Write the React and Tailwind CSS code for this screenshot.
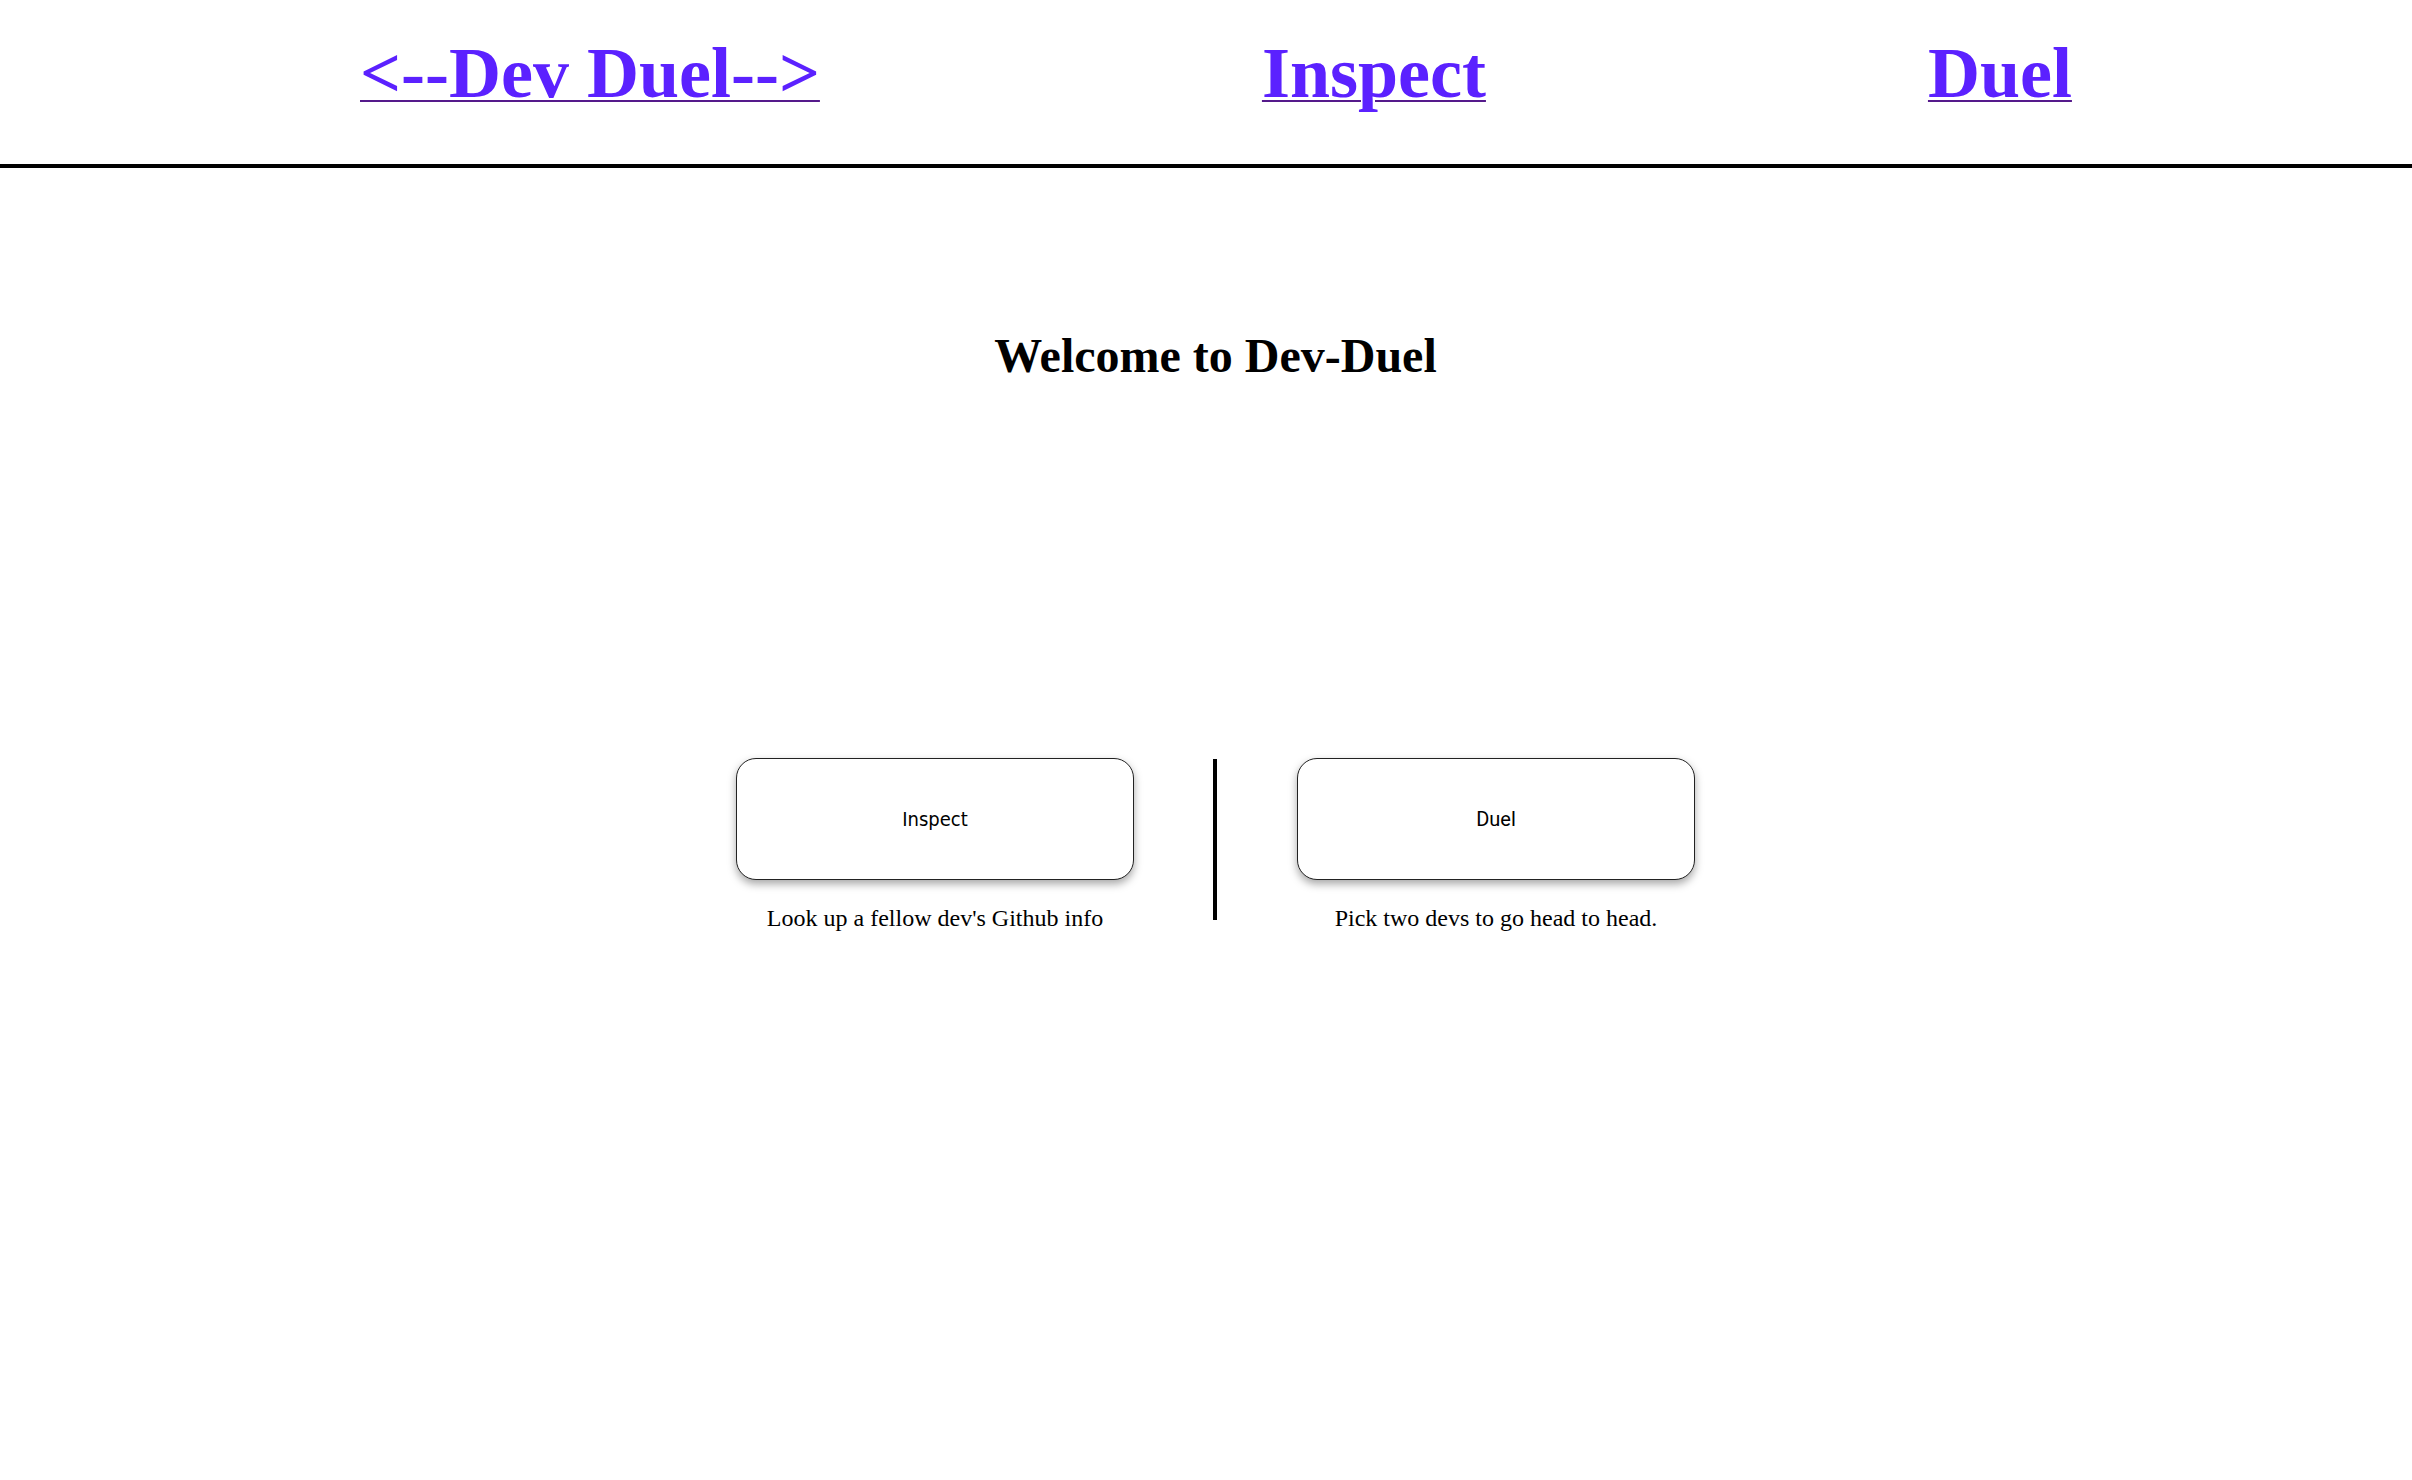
export default function App() {
  const linkCls =
    "text-[72px] leading-[80px] font-bold text-[#5b21ff] underline decoration-[#551a8b] decoration-[1.5px] underline-offset-[3px] whitespace-nowrap";
  return (
    <div className="min-h-[1480px] w-full bg-white text-black font-['Liberation_Serif','Times_New_Roman',serif]">
      <header className="flex items-start pl-[360px] pt-[33px] pb-[51px] gap-[442px] border-b-4 border-black">
        <a href="#" className={linkCls}>&lt;--Dev Duel--&gt;</a>
        <a href="#" className={linkCls}>Inspect</a>
        <a href="#" className={linkCls}>Duel</a>
      </header>
      <main className="flex flex-col items-center pl-[19px]">
        <h2 className="mt-[164px] text-[48px] leading-[48px] font-bold">Welcome to Dev-Duel</h2>
        <div className="mt-[378px] flex items-start">
          <div className="flex flex-col items-center w-[398px]">
            <button className="w-[398px] h-[122px] rounded-[20px] border border-[#222] bg-white shadow-[0_4px_8px_rgba(0,0,0,0.35)] flex items-center justify-center text-[20px] font-['DejaVu_Sans_Condensed','DejaVu_Sans',sans-serif] font-stretch-condensed">
              Inspect
            </button>
            <p className="mt-[25px] text-[24px] leading-[26px] whitespace-nowrap">Look up a fellow dev's Github info</p>
          </div>
          <div className="ml-[79px] mr-[80px] mt-[1px] w-[4px] h-[161px] bg-black" />
          <div className="flex flex-col items-center w-[398px]">
            <button className="w-[398px] h-[122px] rounded-[20px] border border-[#222] bg-white shadow-[0_4px_8px_rgba(0,0,0,0.35)] flex items-center justify-center text-[20px] font-['Roboto',sans-serif]">
              Duel
            </button>
            <p className="mt-[25px] text-[24px] leading-[26px] whitespace-nowrap">Pick two devs to go head to head.</p>
          </div>
        </div>
      </main>
    </div>
  );
}
